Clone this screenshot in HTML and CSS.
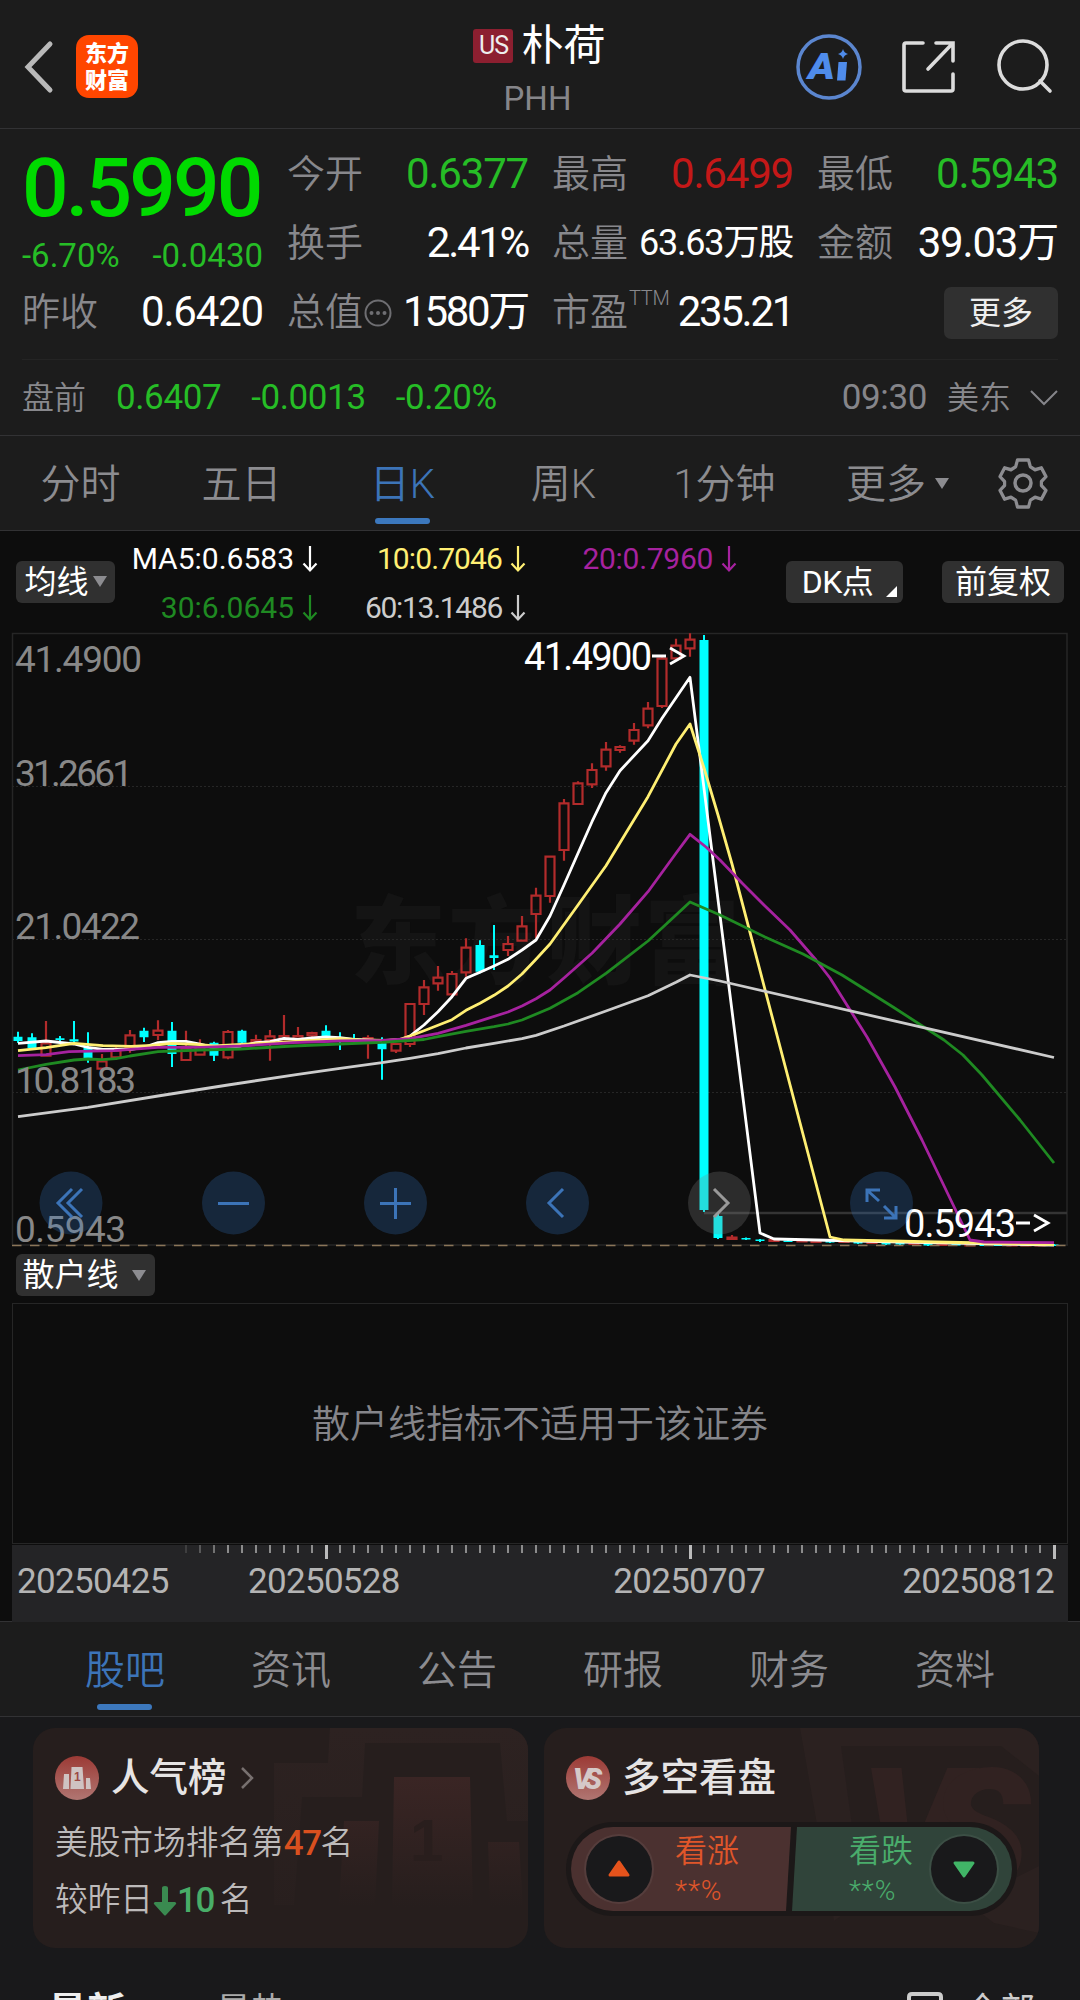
FILE: index.html
```html
<!DOCTYPE html>
<html lang="zh-CN">
<head>
    <meta charset="UTF-8">
    <meta name="viewport" content="width=device-width, initial-scale=1.0">
    <title>朴荷 PHH</title>
    <link rel="stylesheet" href="styles.css">
</head>
<body>
    <header class="header">
        <div class="header-left">
            <svg class="back" width="32" height="54" viewBox="0 0 32 54"><path d="M27 4 5 27l22 23"/></svg>
            <div class="logo"><span>东方</span><span>财富</span></div>
        </div>
        <div class="title">
            <div class="title-name"><span class="market">US</span>朴荷</div>
            <div class="title-code">PHH</div>
        </div>
        <div class="header-right">
            <svg width="68" height="68" viewBox="0 0 68 68">
                <circle cx="34" cy="34" r="31" fill="none" stroke="#5b86cf" stroke-width="3.5"/>
                <text class="ai" x="13" y="46" textLength="27" lengthAdjust="spacingAndGlyphs">A</text>
                <path d="M43.5 29h8.5l-1.5 18.5h-8.5z" fill="#4f8ceb"/>
                <path d="M48 16q1 4 5 5-4 1-5 5-1-4-5-5 4-1 5-5z" fill="#4f8ceb"/>
            </svg>
            <svg class="line-icon" width="56" height="56" viewBox="0 0 56 56"><path d="M22 4H5q-2 0-2 2v44q0 2 2 2h45q2 0 2-2V35M35 4h17v18M51 5 27 30"/></svg>
            <svg class="line-icon" width="58" height="58" viewBox="0 0 58 58"><circle cx="28" cy="27" r="24"/><path d="m45 43 10 10"/></svg>
        </div>
    </header>

    <section class="quote">
        <div class="quote-grid">
            <div class="price">0.5990</div>
            <div class="cell"><label>今开</label><b class="down">0.6377</b></div>
            <div class="cell"><label>最高</label><b class="up">0.6499</b></div>
            <div class="cell"><label>最低</label><b class="down">0.5943</b></div>
            <div class="change"><span>-6.70%</span><span>-0.0430</span></div>
            <div class="cell"><label>换手</label><b class="narrow">2.41%</b></div>
            <div class="cell"><label>总量</label><b class="small">63.63万股</b></div>
            <div class="cell"><label>金额</label><b>39.03万</b></div>
            <div class="cell"><label>昨收</label><b>0.6420</b></div>
            <div class="cell"><label>总值<svg class="dots" width="28" height="28" viewBox="0 0 28 28"><circle cx="14" cy="14" r="12.5"/><path d="M7.500 14h.01M14 14h.01M20.500 14h.01"/></svg></label><b class="narrow">1580万</b></div>
            <div class="cell"><label>市盈<sup>TTM</sup></label><b class="narrow">235.21</b></div>
            <div class="cell cell-more"><button class="more">更多</button></div>
        </div>
        <div class="pre-market">
            <span class="pre-label">盘前</span>
            <span class="down">0.6407</span>
            <span class="down">-0.0013</span>
            <span class="down">-0.20%</span>
            <span class="time">09:30</span>
            <span class="pre-label">美东</span>
            <svg width="28" height="18" viewBox="0 0 28 18"><path d="m1 2 13 13L27 2" fill="none" stroke="#85858a" stroke-width="2"/></svg>
        </div>
    </section>

    <nav class="period-tabs">
        <a>分时</a>
        <a>五日</a>
        <a class="active">日K</a>
        <a>周K</a>
        <a>1分钟</a>
        <a class="tab-more">更多<i class="caret"></i></a>
        <svg class="gear" width="50" height="52" viewBox="-25 -26 50 52"><path d="M-6-23.500H6l2 7 5 3 7-2 5 9-5 5v4l5 5-5 9-7-2-5 3-2 7H-6l-2-7-5-3-7 2-5-9 5-5v-4l-5-5 5-9 7 2 5-3z" transform="scale(.92 .98)"/><circle r="8"/></svg>
    </nav>

    <section class="chart-box">
        <div class="chart-bar">
            <button class="chip chip-ma">均线<i class="caret"></i></button>
            <div class="ma-list">
                <span class="ma5">MA5:0.6583<svg class="arrow" width="16" height="28" viewBox="0 0 16 28"><path d="M8 1v24M1.500 18.500 8 25.500l6.500-7"/></svg></span>
                <span class="ma10">10:0.7046<svg class="arrow" width="16" height="28" viewBox="0 0 16 28"><path d="M8 1v24M1.500 18.500 8 25.500l6.500-7"/></svg></span>
                <span class="ma20">20:0.7960<svg class="arrow" width="16" height="28" viewBox="0 0 16 28"><path d="M8 1v24M1.500 18.500 8 25.500l6.500-7"/></svg></span>
                <span class="ma30">30:6.0645<svg class="arrow" width="16" height="28" viewBox="0 0 16 28"><path d="M8 1v24M1.500 18.500 8 25.500l6.500-7"/></svg></span>
                <span class="ma60">60:13.1486<svg class="arrow" width="16" height="28" viewBox="0 0 16 28"><path d="M8 1v24M1.500 18.500 8 25.500l6.500-7"/></svg></span>
            </div>
            <button class="chip chip-dk">DK点<i class="corner"></i></button>
            <button class="chip chip-fq">前复权</button>
        </div>

        <svg class="kline" width="1080" height="616" viewBox="0 632 1080 616">
            <g class="watermark"><text x="350" y="976" textLength="390">东方财富</text></g>
            <path class="frame" d="M12.500 1245V633.500H1067V1245"/>
            <path class="frame" d="M12 1245H1068"/>
            <path class="gridline" d="M12 786.500H1067M12 939.500H1067M12 1092.500H1067"/>
            <path d="M704 1213H1067" stroke="#343434" stroke-width="2.5"/>
            <g id="candles"></g>
            <path d="M12 1245.500H1067" stroke="#8a7558" stroke-width="1.3" stroke-dasharray="9.5 8.5"/>
            <g id="lines"></g>
            <g class="scale">
                <text x="15" y="672" textLength="127">41.4900</text>
                <text x="15" y="786" textLength="118">31.2661</text>
                <text x="15" y="939" textLength="125">21.0422</text>
                <text x="15" y="1093" textLength="121">10.8183</text>
                <text x="15" y="1242" textLength="111">0.5943</text>
            </g>
            <g class="mark">
                <text x="524" y="670" textLength="128">41.4900</text>
                <text x="904" y="1237" textLength="112">0.5943</text>
                <path d="M652 656h14M670 648l14 8-14 8M1016 1223h14M1034 1215l14 8-14 8"/>
            </g>
            <g class="tool">
                <circle cx="71" cy="1203" r="31.5"/><path d="m72 1189-14 14 14 14M82 1189l-14 14 14 14"/>
                <circle cx="233.5" cy="1203" r="31.5"/><path d="M218 1203.500h31"/>
                <circle cx="395.5" cy="1203" r="31.5"/><path d="M380 1203.500h31M395.500 1188v31"/>
                <circle cx="557.5" cy="1203" r="31.5"/><path d="m563 1189-14 14 14 14"/>
                <circle cx="881.5" cy="1203" r="31.5"/><path d="M867 1202v-12h13M868 1191l11 10M884 1218h12v-12M895 1217l-11-11"/>
            </g>
            <g class="tool off"><circle cx="719.5" cy="1203" r="31.5"/><path d="m714 1189 14 14-14 14"/></g>
        </svg>

        <div class="sub-bar"><button class="chip chip-sub">散户线<i class="caret"></i></button></div>
        <div class="sub-chart">散户线指标不适用于该证券</div>
        <div class="axis">
            <svg width="1056" height="16" viewBox="12 1545 1056 16"><g id="ticks"></g></svg>
            <div class="dates"><span>20250425</span><span>20250528</span><span>20250707</span><span>20250812</span></div>
        </div>
    </section>

    <nav class="info-tabs">
        <a class="active">股吧</a>
        <a>资讯</a>
        <a>公告</a>
        <a>研报</a>
        <a>财务</a>
        <a>资料</a>
    </nav>

    <section class="cards">
        <div class="card">
            <svg class="card-bg" width="495" height="220" viewBox="33 1728 495 220">
                <defs>
                    <linearGradient id="fade" x1="0" y1="0" x2="0" y2="1"><stop offset="0" stop-color="#3a2524"/><stop offset="1" stop-color="#3a2524" stop-opacity="0"/></linearGradient>
                    <linearGradient id="fade2" x1="0" y1="0" x2="0" y2="1"><stop offset="0" stop-color="#2d2221"/><stop offset="1" stop-color="#2d2221" stop-opacity=".3"/></linearGradient>
                </defs>
                <path fill="url(#fade2)" d="M274 1763h54l2-35h198v93h-21l-7-78H365l-3 54h-60l-8 108h-20z"/>
                <path fill="url(#fade)" d="M394 1777h76l3 130h-81zM344 1821h35l-4 85h-36zM488 1842h31l4 65h-33z"/>
                <text x="410" y="1861" class="bg-one">1</text>
            </svg>
            <div class="card-title">
                <svg width="44" height="44" viewBox="0 0 44 44"><defs><linearGradient id="red" x1="0" y1="0" x2="0" y2="1"><stop offset="0" stop-color="#9c3a35"/><stop offset="1" stop-color="#b07672"/></linearGradient></defs><circle cx="22" cy="22" r="22" fill="url(#red)"/><path fill="#cfc3c2" d="M9 18h5v15H8zM16.500 11h11L29 33H15.500zM31 22h4l1 11h-5z"/><text x="19" y="25" class="icon-one">1</text></svg>
                <h3>人气榜</h3>
                <svg class="go" width="14" height="24" viewBox="0 0 14 24"><path d="m1 2 10 10L1 22"/></svg>
            </div>
            <p class="rank">美股市场排名第<em class="hot">47</em>名</p>
            <p class="rank">较昨日<svg width="24" height="32" viewBox="0 0 24 32"><path d="M9 3q0-2 3-2t3 2v14h7q2 1 1 2L13 30q-1 1-2 0L1 19q-1-1 1-2h7z" fill="#3a8a50"/></svg><em class="cool">10</em> 名</p>
        </div>
        <div class="card">
            <svg class="card-bg" width="495" height="220" viewBox="544 1728 495 220">
                <path fill="#2b2120" d="M800 1728h239v205l-45-10-80-60-80 58z"/>
                <path fill="#261e1d" d="M841 1746h160l38 30v90l-60 30-120-20z"/>
                <text x="860" y="1888" class="bg-vs" textLength="170">VS</text>
            </svg>
            <div class="card-title">
                <svg width="44" height="44" viewBox="0 0 44 44"><circle cx="22" cy="22" r="22" fill="url(#red)"/><text x="7" y="33" textLength="29" class="icon-vs">VS</text></svg>
                <h3>多空看盘</h3>
            </div>
            <div class="vote">
                <div class="vote-up">
                    <div class="knob"><svg width="24" height="20" viewBox="0 0 24 20"><path d="M12 3 21 16H3z" fill="#e5531c" stroke="#e5531c" stroke-width="3" stroke-linejoin="round"/></svg></div>
                    <div class="vote-text"><span>看涨</span><small>**%</small></div>
                </div>
                <div class="vote-down">
                    <div class="vote-text"><span>看跌</span><small>**%</small></div>
                    <div class="knob"><svg width="24" height="20" viewBox="0 0 24 20"><path d="M12 17 3 4h18z" fill="#41b567" stroke="#41b567" stroke-width="3" stroke-linejoin="round"/></svg></div>
                </div>
            </div>
        </div>
    </section>

    <div class="feed-bar">
        <span class="feed-on">最新</span>
        <span class="feed-off">最热</span>
        <span class="feed-filter"><svg width="36" height="36" viewBox="0 0 36 36"><path d="M5 2h26q3 0 3 3v26H2V5q0-3 3-3zM10 11h16"/></svg>全部</span>
    </div>

    <script src="script.js"></script>
</body>
</html>
```
FILE: styles.css
```css
* { box-sizing: border-box; }
body { margin: 0; width: 1080px; height: 2000px; overflow: hidden; background: #19191b; color: #fff; font-family: Roboto, "Noto Sans CJK SC", sans-serif; line-height: 1.2; }
button { border: 0; padding: 0; color: #fff; font-family: inherit; }
svg { display: block; flex: none; }

/* header */
.header { display: grid; grid-template-columns: 1fr 1fr 1fr; height: 129px; background: #1c1c1c; border-bottom: 1px solid #323234; }
.header-left { display: flex; align-items: center; gap: 21px; padding: 5px 0 0 23px; }
.back path { fill: none; stroke: #b9b9b9; stroke-width: 5; stroke-linecap: round; }
.logo { display: flex; flex-direction: column; width: 62px; height: 63px; padding-top: 5px; background: #ff4600; border-radius: 13px; font-size: 22px; font-weight: 900; line-height: 27px; text-align: center; }
.title { text-align: center; }
.title-name { display: flex; justify-content: center; align-items: center; gap: 8px; height: 60px; padding: 0 1px 0 0; margin-top: 16px; font-size: 42px; line-height: 60px; }
.market { width: 40px; height: 34px; background: #8c1f30; border-radius: 3px; font-size: 25px; letter-spacing: -1px; line-height: 34px; text-align: center; color: #eee; }
.title-code { margin: 3px 5px 0 0; font-size: 33px; line-height: 40px; color: #86868a; }
.header-right { display: flex; align-items: center; justify-content: flex-end; padding: 5px 27px 0 0; gap: 38px; }
.line-icon { fill: none; stroke: #dcdcdc; stroke-width: 3.6; stroke-linecap: round; }
.ai { font: italic 900 36px Roboto, sans-serif; fill: #4f8ceb; }

/* quote */
.quote { height: 307px; padding: 11px 22px 0; background: #1c1c1c; border-bottom: 1px solid #323234; }
.quote-grid { display: grid; grid-template-columns: repeat(4, 241px); grid-template-rows: repeat(3, 69px); column-gap: 24px; height: 219px; }
.price { margin: 0; font-size: 82px; font-weight: 500; line-height: 96px; letter-spacing: -2.9px; color: #00da00; }
.change { display: flex; justify-content: space-between; align-items: center; padding-top: 24px; font-size: 33px; letter-spacing: 0; color: #26bd26; }
.cell { display: flex; justify-content: space-between; align-items: center; white-space: nowrap; }
.cell label { display: flex; align-items: center; position: relative; padding-top: 1px; font-size: 38px; font-weight: 350; color: #88888c; }
.cell b { font-size: 42px; font-weight: 400; letter-spacing: -1.2px; }
.cell b.small { font-size: 36px; letter-spacing: -1.2px; }
.cell b.narrow { letter-spacing: -2.3px; }
.down { color: #26bd26 !important; }
.up { color: #c41818; }
.dots { margin-left: 1px; fill: none; stroke: #6e6e72; stroke-width: 2; }
.dots path { stroke-width: 4; stroke-linecap: round; }
.cell sup { position: absolute; left: 77px; top: -3px; font-size: 20px; letter-spacing: -.3px; line-height: 24px; }
.cell-more { justify-content: flex-end; }
.more { width: 114px; height: 52px; background: #303030; border-radius: 7px; font-size: 32px; line-height: 52px; color: #eee; }
.pre-market { display: flex; align-items: center; height: 75px; padding-top: 2px; border-top: 1px solid #242424; font-size: 35px; letter-spacing: -.4px; gap: 30px; }
.pre-label { font-size: 32px; font-weight: 350; color: #88888c; letter-spacing: 0; }
.time { margin-left: auto; margin-right: -10px; color: #85858a; }
.pre-market svg { margin-left: -11px; }

/* period tabs */
.period-tabs { display: flex; align-items: center; height: 95px; background: #1c1c1c; border-bottom: 1px solid #323234; }
.period-tabs a, .info-tabs a { position: relative; width: 161px; height: 94px; text-align: center; font-size: 40px; font-weight: 350; line-height: 98px; color: #8c8c90; white-space: nowrap; }
.period-tabs .active, .info-tabs .active { color: #3c74b8; }
.active::after { content: ""; position: absolute; left: 50%; bottom: 6px; width: 55px; height: 6px; margin-left: -28px; border-radius: 3px; background: #3c78bd; }
.period-tabs .tab-more { padding-left: 24px; }
.caret { display: inline-block; border: 7px solid transparent; border-top: 11px solid #8c8c90; border-bottom: 0; }
.tab-more .caret { margin: 0 0 8px 9px; vertical-align: middle; }
.gear { margin-left: 32px; fill: none; stroke: #8c8c90; stroke-width: 3.5; stroke-linejoin: round; }

/* chart */
.chart-box { background: #0d0d0d; height: 1091px; border-bottom: 1px solid #323234; }
.chart-bar { display: flex; align-items: center; height: 101px; padding: 0 16px; }
.chip { display: flex; align-items: center; justify-content: center; height: 42px; background: #303030; border-radius: 6px; font-size: 32px; line-height: 44px; white-space: nowrap; flex: none; }
.chip-ma { width: 99px; gap: 4px; }
.ma-list { display: grid; grid-template-columns: 203px 208px 211px; row-gap: 21px; flex: none; padding-top: 4px; font-size: 30px; line-height: 28px; }
.ma-list span { display: flex; justify-content: flex-end; align-items: center; gap: 8px; }
.arrow { fill: none; stroke: currentColor; stroke-width: 2.2; }
.ma5 { color: #fff; }
.ma10 { color: #ffef73; letter-spacing: -.9px; }
.ma20 { color: #a6229f; letter-spacing: -.3px; }
.ma30 { color: #1f8a22; }
.ma60 { color: #ccc; letter-spacing: -1.3px; }
.chip-dk { position: relative; width: 117px; margin-left: 49px; padding-right: 14px; letter-spacing: -.5px; }
.corner { position: absolute; right: 6px; bottom: 6px; border-left: 11px solid transparent; border-bottom: 11px solid #fff; }
.chip-fq { width: 122px; margin-left: 39px; }
.frame { fill: none; stroke: #262626; stroke-width: 1.5; }
.gridline { stroke: #262626; stroke-dasharray: 2 2; }
.watermark { font: 900 96px "Noto Sans CJK SC", sans-serif; fill: #141414; }
.scale { font-size: 37px; fill: #888; }
.mark { font-size: 38px; fill: #fff; }
.mark path { fill: none; stroke: #fff; stroke-width: 2.8; }
.tool circle { fill: #3478c8; fill-opacity: .25; }
.tool path { fill: none; stroke: #3c74b8; stroke-width: 3; }
.off circle { fill: #808080; fill-opacity: .27; }
.off path { stroke: #999; }
.rise { fill: none; stroke: #b22b2b; stroke-width: 2.2; }
.fall { fill: #00ffff; stroke: none; }
.line { fill: none; stroke-width: 2.8; stroke-linejoin: round; }
.sub-bar { height: 55px; padding: 6px 16px 0; }
.chip-sub { width: 139px; gap: 13px; padding-right: 3px; }
.sub-chart { height: 241px; margin: 0 12px; border: 1.5px solid #262626; font-size: 38px; font-weight: 350; line-height: 240px; text-align: center; color: #85858a; }
.axis { height: 77px; margin: 1px 12px 0; background: #242426; }
.dates { display: grid; grid-template-columns: 231px 169px 380px 1fr; margin-top: 2px; padding: 0 14px 0 5px; font-size: 35px; line-height: 38px; letter-spacing: -.7px; color: #b4b4b4; }
.dates span:nth-child(3) { padding-right: 32px; text-align: right; }
.dates span:nth-child(4) { text-align: right; }

/* info tabs */
.info-tabs { display: flex; height: 95px; padding: 0 42px; background: #1c1c1c; border-bottom: 1px solid #323234; }
.info-tabs a { width: 166px; line-height: 98px; }

/* cards */
.cards { display: flex; gap: 16px; padding: 11px 33px 0; }
.card { position: relative; width: 495px; height: 220px; padding: 28px 22px 0; background: #261e1d; border-radius: 22px; overflow: hidden; }
.card-bg { position: absolute; left: 0; top: 0; }
.bg-one { font: 900 60px "Liberation Sans", sans-serif; fill: #291e1d; }
.bg-vs { font: italic 900 168px Roboto, sans-serif; fill: #312221; }
.card-title { position: relative; display: flex; align-items: center; height: 44px; }
.card-title h3 { margin: 0 14px 0 12px; font-size: 38.5px; font-weight: 500; line-height: 46px; color: #e6e4e4; }
.icon-one { font: 700 12px "Liberation Sans", sans-serif; fill: #9c4a45; }
.icon-vs { font: italic 900 29px Roboto, sans-serif; fill: #d5c9c8; }
.go { fill: none; stroke: #77706f; stroke-width: 2.5; }
.rank { position: relative; display: flex; align-items: center; height: 57px; margin: 0; font-size: 32.7px; font-weight: 350; color: #bdbaba; white-space: pre; }
.card-title + .rank { margin-top: 15px; }
.rank em { font-style: normal; font-weight: 500; font-size: 35px; letter-spacing: -1.5px; }
.hot { color: #d9501f; }
.cool { margin-right: -2px; color: #48ad68; }
.vote { position: relative; display: flex; width: 451px; height: 94px; margin-top: 22px; padding: 5px; border-radius: 47px; background: #1c1818; }
.vote-up, .vote-down { display: flex; align-items: center; height: 84px; }
.vote-up { width: 220px; padding-left: 15px; background: #4b3130; border-radius: 42px 0 0 42px; clip-path: polygon(0 0, 100% 0, 215px 100%, 0 100%); }
.vote-down { width: 220px; margin-left: 1px; padding-right: 15px; justify-content: flex-end; background: #30443a; border-radius: 0 42px 42px 0; clip-path: polygon(5px 0, 100% 0, 100% 100%, 0 100%); }
.knob { display: flex; align-items: center; justify-content: center; width: 66px; height: 66px; border-radius: 50%; background: #19191b; box-shadow: 0 0 0 2px rgba(255, 255, 255, .06); }
.vote-text { display: flex; flex-direction: column; font-size: 32px; font-weight: 350; line-height: 44px; }
.vote-text small { font-size: 28px; line-height: 36px; letter-spacing: 1px; }
.vote-up .vote-text { margin-left: 23px; color: #e0562a; }
.vote-down .vote-text { margin-right: 18px; color: #4aad6c; }

.feed-bar { display: flex; height: 60px; margin-top: 36px; padding: 0 45px 0 48px; font-size: 39px; line-height: 56px; white-space: nowrap; }
.feed-on { font-weight: 700; color: #eee; }
.feed-off { margin-left: 90px; color: #aaa; font-size: 35px; }
.feed-filter { display: flex; gap: 22px; margin-left: auto; font-size: 35px; color: #ccc; }
.feed-filter svg { margin-top: 8px; fill: none; stroke: #ccc; stroke-width: 4; }
```
FILE: script.js
```js
// one candle every 14px, the first at x = 18: [type, high, top, bottom, low]
const candles = [
    ['d', 1031.7, 1036.7, 1041, 1043], ['d', 1033.3, 1037.3, 1048.3, 1049], ['u', 1021, 1043.3, 1055.7, 1056],
    ['d', 1036, 1038.3, 1040, 1043], ['d', 1021, 1039.3, 1041.5, 1042], ['d', 1032.3, 1047.3, 1058.3, 1062.7],
    ['u', 1054, 1061.3, 1068.7, 1075], ['u', 1047.3, 1050.7, 1057.3, 1060], ['u', 1030, 1035.3, 1047.3, 1052.7],
    ['d', 1027.7, 1030.7, 1037.3, 1042], ['u', 1020.3, 1030.7, 1035, 1040], ['d', 1022, 1030.7, 1054, 1067],
    ['u', 1030.7, 1048.3, 1060, 1060.7], ['u', 1039.3, 1047.3, 1054.7, 1055], ['d', 1041.7, 1042.7, 1055.7, 1061],
    ['u', 1030, 1032, 1057.3, 1059.3], ['d', 1029.7, 1030.7, 1042.7, 1043.3], ['u', 1034.7, 1040, 1042.3, 1042.7],
    ['u', 1030, 1036.3, 1040, 1060.7], ['u', 1015, 1036, 1039.3, 1040], ['u', 1027, 1036, 1038.7, 1040],
    ['u', 1031.7, 1033, 1035.3, 1037.3], ['d', 1025.3, 1030.7, 1036.7, 1037.3], ['d', 1032.3, 1037.3, 1039.3, 1050],
    ['d', 1034, 1038, 1042, 1043.3], ['u', 1035.3, 1038, 1041.3, 1058.7], ['d', 1037.3, 1043.3, 1049.3, 1079.7],
    ['u', 1043.3, 1044, 1050.7, 1053], ['u', 1003.3, 1004, 1044, 1047], ['u', 980, 987.3, 1004, 1015],
    ['u', 966, 977.7, 983.3, 990.7], ['u', 971, 974, 994.3, 995], ['u', 938.3, 947.7, 972.3, 976.7],
    ['d', 940.3, 945, 971.7, 973.3], ['d', 925, 955.3, 958, 970], ['u', 936, 944, 950, 956],
    ['u', 916, 926.3, 940.7, 941.7], ['u', 887.7, 895.7, 914, 938.3], ['u', 856, 856.7, 896, 902.7],
    ['u', 799, 803.3, 850, 860.7], ['u', 781.3, 783.3, 804, 804.3], ['u', 763.3, 770, 784.3, 788],
    ['u', 742, 749.7, 766.3, 770.7], ['u', 745.3, 747, 750, 752.7], ['u', 723, 730, 740.7, 744.7],
    ['u', 702, 708.7, 725.3, 728.3], ['u', 656.7, 658.7, 706, 708], ['u', 638.7, 645.7, 658.3, 659.3],
    ['u', 633.3, 639.7, 648.3, 656.7], ['d', 635, 640, 1210, 1212], ['d', 1214, 1216, 1238, 1239],
    ['u', 1235, 1237.5, 1239, 1239], ['d', 1237.5, 1238, 1239.5, 1240], ['d', 1239, 1239.5, 1241, 1242],
    ['u', 1239, 1240, 1241, 1241], ['d', 1240, 1240.5, 1242, 1242], ['u', 1240, 1240.5, 1241.5, 1242],
    ['u', 1241, 1241, 1242, 1242], ['d', 1241, 1241, 1242.5, 1243], ['u', 1241, 1241.5, 1242, 1243],
    ['d', 1242, 1242, 1243.5, 1244], ['u', 1242, 1242.5, 1243, 1244], ['d', 1243, 1243, 1244.5, 1245],
    ['d', 1243, 1243, 1244.5, 1245], ['u', 1243, 1243.5, 1244, 1245], ['d', 1244, 1244, 1245.5, 1246],
    ['u', 1244, 1244.5, 1245, 1246], ['d', 1244, 1244, 1245.5, 1246], ['u', 1244, 1245, 1245.5, 1246],
    ['d', 1244, 1244.5, 1246, 1246], ['d', 1244, 1244.5, 1246, 1246], ['u', 1244, 1245, 1245.5, 1246],
    ['u', 1244, 1245, 1245.5, 1246], ['u', 1244, 1245, 1245.5, 1246], ['d', 1244, 1244.5, 1246, 1246]
];

const lines = {
    '#cccccc': '18,1116.7 88,1107.3 158,1096 228,1085 298,1074.3 340,1068.3 382,1062.7 410,1058.3 438,1053.7 466,1048 494,1043.3 522,1038.7 536,1035.3 564,1026 606,1011 648,995.7 676,982.3 690,975 720,981 1054,1057.5',
    '#1f8a22': '18,1070 46,1064.3 74,1060 88,1059 102,1059.7 116,1058.7 130,1056 158,1051.7 200,1050 241,1049 293,1046 340,1044 382,1042.3 424,1039.5 438,1036.7 466,1031.3 494,1026.7 508,1024 522,1020 550,1008.3 578,992.7 606,973.3 648,941 676,915 690,902 720,915 765,937 803,954 842,975 893,1007 944,1040 963,1055 982,1075 1020,1120 1054,1163',
    '#a6229f': '18,1055.7 46,1054.7 69,1051.7 114,1050.7 158,1047.3 200,1047.3 241,1046 293,1042.7 340,1041 382,1040.3 410,1038.7 438,1033.3 466,1025.3 508,1012 522,1006 536,998.7 550,990 564,978 592,953.3 620,924 648,891.7 676,853.3 690,834.3 706,847 720,860 742,883 765,906 790,930 816,960 830,978 867,1037 895,1087 922,1140 970,1240 984,1242 1054,1242.7',
    '#ffef73': '18,1050.7 46,1047.7 74,1043.3 103,1045.7 131,1046.3 152,1045.3 172,1043.3 200,1044.7 214,1046 241,1044.3 275,1042.7 312,1040.3 340,1038.7 361,1040 386,1040.3 400,1039.3 410,1036 424,1030.7 438,1025.3 452,1019.7 466,1010.3 480,1003.3 494,995.3 508,986 522,974 536,959.3 550,944 578,905 606,865.7 648,796.7 676,744 690,724 704,768 718,815 732,864 830,1237 844,1240 1054,1244.5',
    '#ffffff': '18,1043.3 46,1041 74,1044 88,1047.3 103,1049.3 131,1049.3 144,1047.3 158,1042.7 172,1041.3 186,1041.3 200,1044 214,1047.7 228,1047.3 241,1046 256,1042.7 270,1041.7 284,1038.3 298,1039.3 312,1038 326,1037 340,1037.7 354,1039.3 382,1040.7 400,1040 410,1036 424,1025 438,1011.7 452,996.7 466,978.3 480,972.3 494,966 508,959.3 522,950 536,940 550,916 564,885 578,853.3 592,821.7 606,792.7 620,770.7 648,740.7 662,718.3 676,697.7 690,677.3 760,1233 774,1239 900,1242 1054,1245'
};

let out = '';
candles.forEach(([type, high, top, bottom, low], i) => {
    const x = 18 + i * 14;
    if (type === 'u') {
        out += `<path class="rise" d="M${x} ${high}V${top}M${x} ${bottom}V${low}M${x - 4.5} ${top}h9V${bottom}h-9z"/>`;
    } else {
        out += `<path class="fall" d="M${x - 1} ${high}h2V${low}h-2zM${x - 4.5} ${top}h9V${bottom}h-9z"/>`;
    }
});
document.getElementById('candles').innerHTML = out;

// MA5 is painted first, the longer averages go over it
document.getElementById('lines').innerHTML = Object.entries(lines).reverse()
    .map(([color, points]) => `<polyline class="line" stroke="${color}" points="${points}"/>`).join('');

// date ticks, the long ones sit over a date, the first few fade in
let ticks = '';
for (let i = 12; i < 75; i++) {
    const long = [22, 48, 74].includes(i);
    const shade = Math.min(1, (i - 11) / 4);
    ticks += `<rect x="${17 + i * 14}" y="1545" width="${long ? 3 : 2}" height="${long ? 14 : 8}" fill="${long ? '#bbb' : '#8c8c8c'}" opacity="${shade}"/>`;
}
document.getElementById('ticks').innerHTML = ticks;
```
